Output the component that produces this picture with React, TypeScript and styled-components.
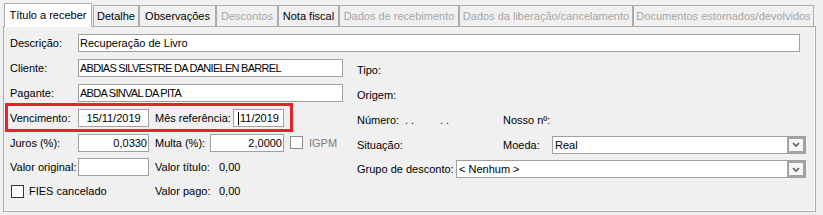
import React from "react";
import styled, { createGlobalStyle } from "styled-components";

const Global = createGlobalStyle`
  html, body { margin: 0; padding: 0; background: #f0f0f0; }
  body {
    font-family: "Liberation Sans", Arial, sans-serif;
    font-size: 11px;
    color: #000;
  }
`;

const Window = styled.div`
  padding: 3px 0 0 3px;
  width: 823px;
  height: 215px;
  box-sizing: border-box;
  background: #f0f0f0;
`;

const TabStrip = styled.div`
  display: flex;
  align-items: flex-end;
  height: 23px;
  padding-left: 1px;
  position: relative;
  z-index: 1;
`;

const Tab = styled.div<{ $w: number; $active?: boolean; $disabled?: boolean }>`
  box-sizing: border-box;
  width: ${(p) => p.$w}px;
  height: ${(p) => (p.$active ? 24 : 21)}px;
  margin-bottom: ${(p) => (p.$active ? -1 : 0)}px;
  margin-right: ${(p) => (p.$active ? 1 : 0)}px;
  border: 1px solid #acacac;
  border-bottom: none;
  background: ${(p) => (p.$active ? "#ffffff" : "#f0f0f0")};
  color: ${(p) => (p.$disabled ? "#a6a6a6" : "#000")};
  display: flex;
  align-items: center;
  justify-content: center;
  padding-bottom: ${(p) => (p.$active ? 2 : 0)}px;
  white-space: nowrap;
  overflow: hidden;
`;

const Panel = styled.div`
  box-sizing: border-box;
  width: 813px;
  height: 186px;
  border: 1px solid #acacac;
  background: #f0f0f0;
  padding: 3px 0 0 6px;
  box-shadow: inset -1px -1px 0 #ffffff;
`;

const DescRow = styled.div`
  display: flex;
  align-items: center;
  height: 25px;
`;

const Columns = styled.div`
  display: flex;
`;

const LeftCol = styled.div`
  width: 333px;
  display: grid;
  grid-template-rows: 25px 25px 25px 25px 24px 24px;
`;

const RightCol = styled.div`
  width: 449px;
  margin-left: 14px;
  padding-top: 2px;
  display: grid;
  grid-template-rows: 25px 25px 25px 25px 24px;
`;

const Row = styled.div<{ $marked?: boolean }>`
  display: flex;
  align-items: center;
  position: relative;
  ${(p) =>
    p.$marked
      ? `&::after {
          content: "";
          position: absolute;
          left: -5px;
          top: -2px;
          width: 288px;
          height: 29px;
          box-sizing: border-box;
          border: 3px solid #e8232b;
          pointer-events: none;
        }`
      : ""}
`;

const Label = styled.span<{ $w?: number; $ml?: number; $muted?: boolean }>`
  flex-shrink: 0;
  ${(p) => (p.$w ? `width: ${p.$w}px;` : "")}
  margin-left: ${(p) => p.$ml ?? 0}px;
  color: ${(p) => (p.$muted ? "#7d7d7d" : "#000")};
  white-space: nowrap;
`;

const Field = styled.div<{ $w: number; $align?: "left" | "center" | "right"; $tight?: boolean }>`
  box-sizing: border-box;
  flex-shrink: 0;
  width: ${(p) => p.$w}px;
  height: 18px;
  border: 1px solid #a0a0a0;
  background: #fff;
  padding: 0 ${(p) => (p.$align === "right" ? 1 : 1)}px 0 1px;
  line-height: 16px;
  text-align: ${(p) => p.$align ?? "left"};
  letter-spacing: ${(p) => (p.$tight ? "-0.72px" : "normal")};
  white-space: nowrap;
  overflow: hidden;
`;

const Caret = styled.span`
  display: inline-block;
  width: 1px;
  height: 13px;
  background: #000;
  vertical-align: -3px;
  margin-right: 1px;
`;

const Check = styled.span<{ $ml?: number; $disabled?: boolean }>`
  box-sizing: border-box;
  flex-shrink: 0;
  width: 13px;
  height: 13px;
  margin-left: ${(p) => p.$ml ?? 0}px;
  border: 1px solid ${(p) => (p.$disabled ? "#8c8c8c" : "#333")};
  background: #fff;
`;

const CheckGroup = styled.div<{ $w: number }>`
  display: flex;
  align-items: center;
  width: ${(p) => p.$w}px;
  flex-shrink: 0;
`;

const Dots = styled.span<{ $w: number }>`
  width: ${(p) => p.$w}px;
  flex-shrink: 0;
  white-space: pre;
`;

const Select = styled.div<{ $w: number }>`
  box-sizing: border-box;
  width: ${(p) => p.$w}px;
  height: 18px;
  border: 1px solid #a0a0a0;
  background: #fff;
  display: flex;
  align-items: center;
  flex-shrink: 0;
`;

const SelectText = styled.span`
  flex: 1;
  padding-left: 2px;
  white-space: nowrap;
`;

const DropButton = styled.span`
  box-sizing: border-box;
  width: 18px;
  height: 16px;
  border: 2px solid #a3a3a3;
  background: #f5f5f5;
  display: flex;
  align-items: center;
  justify-content: center;
`;

const Chevron = () => (
  <svg width="8" height="5" viewBox="0 0 8 5">
    <path d="M1 1 L4 4 L7 1" fill="none" stroke="#5a5a5a" strokeWidth="1.6" />
  </svg>
);

const Combo: React.FC<{ w: number; value: string }> = ({ w, value }) => (
  <Select $w={w}>
    <SelectText>{value}</SelectText>
    <DropButton>
      <Chevron />
    </DropButton>
  </Select>
);

const tabs = [
  { label: "Título a receber", w: 88, active: true },
  { label: "Detalhe", w: 46 },
  { label: "Observações", w: 77 },
  { label: "Descontos", w: 62, disabled: true },
  { label: "Nota fiscal", w: 61 },
  { label: "Dados de recebimento", w: 120, disabled: true },
  { label: "Dados da liberação/cancelamento", w: 174, disabled: true },
  { label: "Documentos estornados/devolvidos", w: 181, disabled: true },
];

export default function App() {
  return (
    <>
      <Global />
      <Window>
        <TabStrip>
          {tabs.map((t) => (
            <Tab key={t.label} $w={t.w} $active={t.active} $disabled={t.disabled}>
              {t.label}
            </Tab>
          ))}
        </TabStrip>
        <Panel>
          <DescRow>
            <Label $w={68}>Descrição:</Label>
            <Field $w={722}>Recuperação de Livro</Field>
          </DescRow>
          <Columns>
            <LeftCol>
              <Row>
                <Label $w={68}>Cliente:</Label>
                <Field $w={265} $tight>
                  ABDIAS SILVESTRE DA DANIELEN BARREL
                </Field>
              </Row>
              <Row>
                <Label $w={68}>Pagante:</Label>
                <Field $w={265} $tight>
                  ABDA SINVAL DA PITA
                </Field>
              </Row>
              <Row $marked>
                <Label $w={68}>Vencimento:</Label>
                <Field $w={71} $align="center">
                  15/11/2019
                </Field>
                <Label $w={78} $ml={6}>
                  Mês referência:
                </Label>
                <Field $w={51} $align="center">
                  <Caret />
                  11/2019
                </Field>
              </Row>
              <Row>
                <Label $w={68}>Juros (%):</Label>
                <Field $w={71} $align="right">
                  0,0330
                </Field>
                <Label $w={55} $ml={6}>
                  Multa (%):
                </Label>
                <Field $w={74} $align="right">
                  2,0000
                </Field>
                <Check $ml={6} $disabled />
                <Label $ml={6} $muted>
                  IGPM
                </Label>
              </Row>
              <Row>
                <Label $w={68}>Valor original:</Label>
                <Field $w={71} />
                <Label $w={64} $ml={6}>
                  Valor título:
                </Label>
                <Label>0,00</Label>
              </Row>
              <Row>
                <CheckGroup $w={145}>
                  <Check $ml={1} />
                  <Label $ml={5}>FIES cancelado</Label>
                </CheckGroup>
                <Label $w={64}>Valor pago:</Label>
                <Label>0,00</Label>
              </Row>
            </LeftCol>
            <RightCol>
              <Row>
                <Label>Tipo:</Label>
              </Row>
              <Row>
                <Label>Origem:</Label>
              </Row>
              <Row>
                <Label $w={48}>Número:</Label>
                <Dots $w={35}>. .</Dots>
                <Dots $w={63}>. .</Dots>
                <Label>Nosso nº:</Label>
              </Row>
              <Row>
                <Label $w={146}>Situação:</Label>
                <Label $w={49}>Moeda:</Label>
                <Combo w={254} value="Real" />
              </Row>
              <Row>
                <Label $w={99}>Grupo de desconto:</Label>
                <Combo w={350} value="< Nenhum >" />
              </Row>
            </RightCol>
          </Columns>
        </Panel>
      </Window>
    </>
  );
}
